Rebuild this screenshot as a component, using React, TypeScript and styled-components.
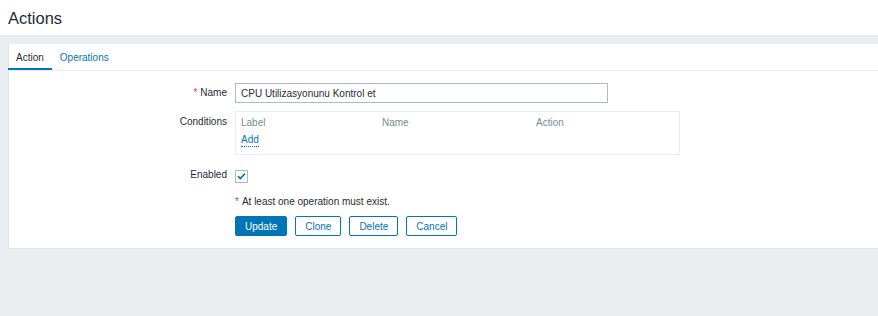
import React from "react";
import styled, { createGlobalStyle } from "styled-components";

const GlobalStyle = createGlobalStyle`
  html, body {
    margin: 0;
    padding: 0;
    background-color: #ebeef0;
    font-family: "Liberation Sans", Arial, sans-serif;
    font-size: 10px;
    color: #1f2c33;
  }
`;

const Page = styled.div`
  min-height: 316px;
  background-color: #ebeef0;
`;

const Header = styled.header`
  height: 35px;
  background-color: #ffffff;
  display: flex;
  align-items: center;
  padding-left: 8px;
  box-sizing: border-box;
`;

const Title = styled.h1`
  margin: 0;
  font-size: 16.5px;
  font-weight: normal;
  color: #1f2c33;
  line-height: 20px;
`;

const Panel = styled.section`
  margin: 9px 0 0 8px;
  background-color: #ffffff;
  border-left: 1px solid #dfe4e7;
  border-bottom: 1px solid #dfe4e7;
`;

const TabBar = styled.nav`
  display: flex;
  height: 26px;
  border-bottom: 1px solid #ebeef0;
`;

const Tab = styled.a<{ $active?: boolean }>`
  display: flex;
  align-items: center;
  padding: 2px 8px 0;
  margin-left: ${(props) => (props.$active ? "-1px" : "0")};
  color: ${(props) => (props.$active ? "#1f2c33" : "#0275b8")};
  border-bottom: 2px solid
    ${(props) => (props.$active ? "#0275b8" : "transparent")};
  cursor: pointer;
`;

const Form = styled.div`
  display: flex;
  flex-direction: column;
  gap: 8px;
  padding: 12px 0 12px;
`;

const Row = styled.div<{ $height?: number; $top?: boolean }>`
  display: grid;
  grid-template-columns: 218px 1fr;
  column-gap: 8px;
  align-items: ${(props) => (props.$top ? "start" : "center")};
  min-height: ${(props) => (props.$height ? `${props.$height}px` : "auto")};
`;

const Label = styled.label<{ $top?: boolean }>`
  text-align: right;
  padding-top: ${(props) => (props.$top ? "4px" : "0")};
  line-height: 14px;
`;

const Required = styled.span`
  color: #e33734;
  margin-right: 3px;
`;

const TextInput = styled.input`
  width: 373px;
  height: 20px;
  box-sizing: border-box;
  border: 1px solid #acbbc2;
  padding: 0 5px;
  font-family: inherit;
  font-size: 10px;
  color: #1f2c33;
  outline: none;
`;

const ConditionsBox = styled.div`
  width: 445px;
  height: 44px;
  box-sizing: border-box;
  border: 1px solid #ebeef0;
  padding: 4px 5px 0;
`;

const CondHead = styled.div`
  display: grid;
  grid-template-columns: 141px 154px 1fr;
  color: #768d99;
  line-height: 14px;
`;

const AddLink = styled.a`
  display: inline-block;
  margin-top: 3px;
  color: #0275b8;
  line-height: 13px;
  border-bottom: 1px dotted #0275b8;
  cursor: pointer;
`;

const CheckBox = styled.span`
  width: 13px;
  height: 13px;
  margin-top: 2px;
  box-sizing: border-box;
  border: 1px solid #acbbc2;
  display: flex;
  align-items: center;
  justify-content: center;
  background-color: #ffffff;
`;

const Message = styled.div`
  line-height: 13px;
`;

const Buttons = styled.div`
  display: flex;
  gap: 8px;
`;

const Button = styled.button<{ $primary?: boolean }>`
  height: 20px;
  padding: 0 9px;
  box-sizing: border-box;
  border: 1px solid #0275b8;
  border-radius: 2px;
  background-color: ${(props) => (props.$primary ? "#0275b8" : "#ffffff")};
  color: ${(props) => (props.$primary ? "#ffffff" : "#0275b8")};
  font-family: inherit;
  font-size: 10px;
  cursor: pointer;
`;

function App() {
  return (
    <Page>
      <GlobalStyle />
      <Header>
        <Title>Actions</Title>
      </Header>
      <Panel>
        <TabBar>
          <Tab $active>Action</Tab>
          <Tab>Operations</Tab>
        </TabBar>
        <Form>
          <Row $height={20}>
            <Label>
              <Required>*</Required>Name
            </Label>
            <TextInput defaultValue="CPU Utilizasyonunu Kontrol et" />
          </Row>
          <Row $top>
            <Label $top>Conditions</Label>
            <ConditionsBox>
              <CondHead>
                <span>Label</span>
                <span>Name</span>
                <span>Action</span>
              </CondHead>
              <AddLink>Add</AddLink>
            </ConditionsBox>
          </Row>
          <Row $height={24}>
            <Label>Enabled</Label>
            <CheckBox>
              <svg width="9" height="8" viewBox="0 0 9 8">
                <path
                  d="M1 4.2 L3.4 6.5 L8 1.5"
                  fill="none"
                  stroke="#0275b8"
                  strokeWidth="1.7"
                />
              </svg>
            </CheckBox>
          </Row>
          <Row>
            <span />
            <Message>
              <Required>*</Required>At least one operation must exist.
            </Message>
          </Row>
          <Row>
            <span />
            <Buttons>
              <Button $primary>Update</Button>
              <Button>Clone</Button>
              <Button>Delete</Button>
              <Button>Cancel</Button>
            </Buttons>
          </Row>
        </Form>
      </Panel>
    </Page>
  );
}

export default App;
